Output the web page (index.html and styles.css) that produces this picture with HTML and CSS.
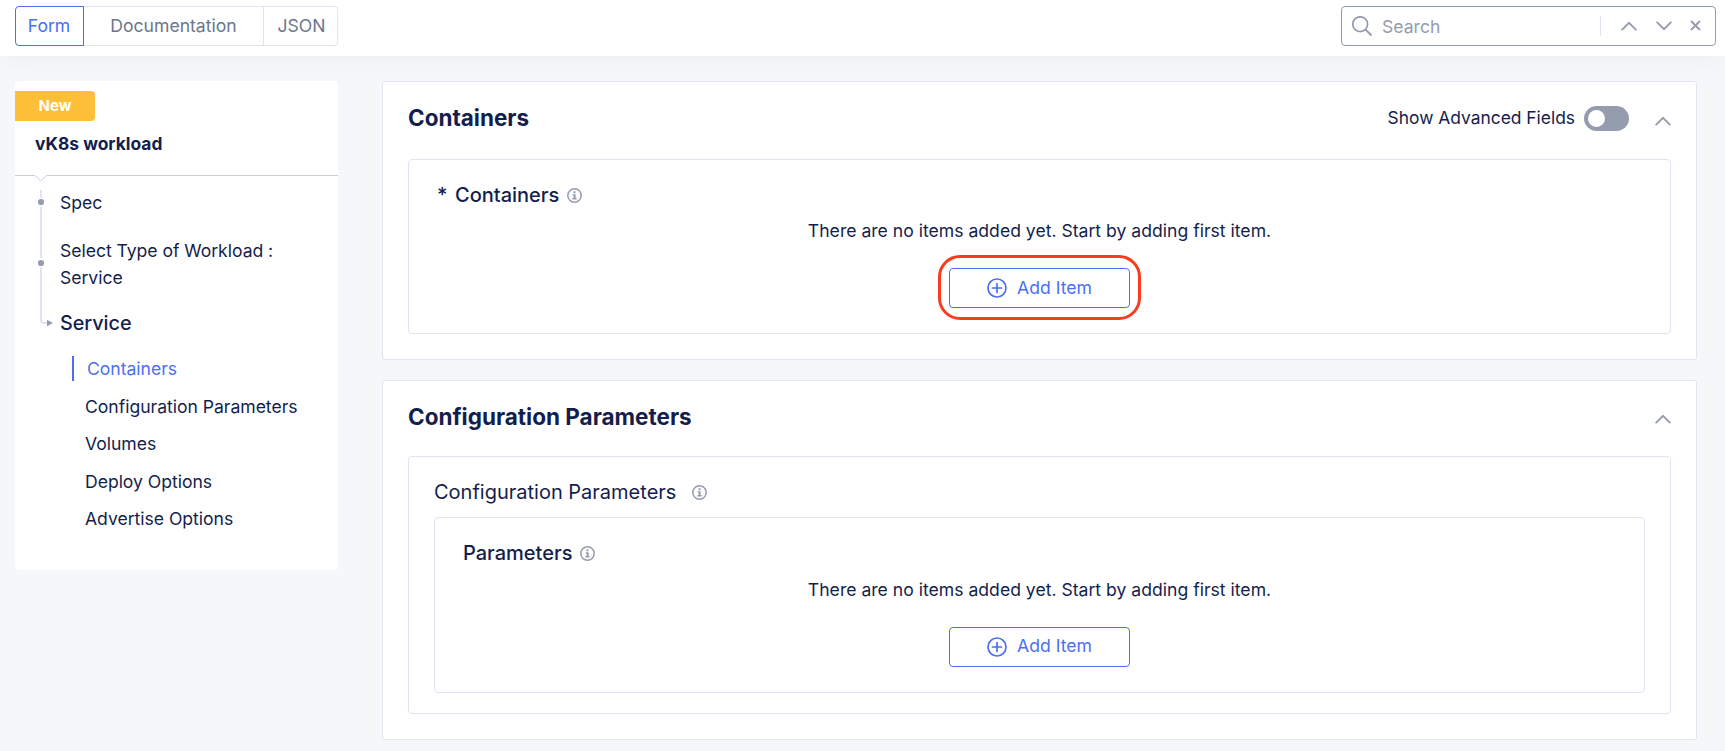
FILE: index.html
```html
<!DOCTYPE html>
<html lang="en">
<head>
<meta charset="utf-8">
<title>vK8s workload</title>
<link rel="stylesheet" href="styles.css">
</head>
<body>
<svg class="defs" width="0" height="0" aria-hidden="true">
  <symbol id="up" viewBox="0 0 16 10"><path d="M1.2 8.6 8 1.8l6.800 6.800" fill="none" stroke="currentColor" stroke-width="1.9" stroke-linecap="round"/></symbol>
  <symbol id="down" viewBox="0 0 16 10"><path d="M1.200 1.400 8 8.200l6.800-6.800" fill="none" stroke="currentColor" stroke-width="1.900" stroke-linecap="round"/></symbol>
  <symbol id="info" viewBox="0 0 15 15">
    <circle cx="7.5" cy="7.500" r="6.700" fill="none" stroke="currentColor" stroke-width="1.500"/>
    <path d="M6.500 3.300h2v1.900h-2zM5.700 6.200h2.900v3.900h1v1.500H5.400v-1.500h1.200V7.600h-.9z" fill="currentColor"/>
  </symbol>
  <symbol id="plus" viewBox="0 0 20 20"><g fill="none" stroke="currentColor" stroke-width="1.700"><circle cx="10" cy="10" r="9"/><path d="M10 5.500v9M5.500 10h9" stroke-linecap="round"/></g></symbol>
</svg>

<header class="topbar">
  <nav class="tabs">
    <a class="tab tab-form active">Form</a>
    <a class="tab tab-docs">Documentation</a>
    <a class="tab tab-json">JSON</a>
  </nav>
  <div class="search">
    <svg class="search-icon" viewBox="0 0 20 20"><g fill="none" stroke="currentColor" stroke-width="1.700"><circle cx="8.200" cy="8.200" r="7.400"/><path d="M13.600 13.600 19.500 19.500" stroke-width="2"/></g></svg>
    <span class="search-text">Search</span>
    <svg class="chevron s-up"><use href="#up"/></svg>
    <svg class="chevron s-down"><use href="#down"/></svg>
    <svg class="close" viewBox="0 0 11 11"><path d="M1 1l9 9M10 1l-9 9" stroke="currentColor" stroke-width="1.900"/></svg>
  </div>
</header>

<main class="page">
  <aside class="sidebar">
    <span class="badge">New</span>
    <h1 class="title">vK8s workload</h1>
    <svg class="divider" viewBox="0 0 323 8"><path d="M0 .5h20l5.700 5.700L31.400.5H323" fill="none" stroke="#c8cde0"/></svg>
    <div class="tree">
      <svg class="rail" viewBox="0 0 45 148">
        <path d="M26 7v8M26 24v51M26 84v53q0 3 3 3h4" fill="none" stroke="#e1e3f1" stroke-width="2"/>
        <g fill="#949cae"><circle cx="26" cy="19" r="3.100"/><circle cx="26" cy="80" r="3.100"/><path d="M32 136.800v6.400l6-3.200z"/></g>
      </svg>
      <div class="steps">
        <a class="step">Spec</a>
        <a class="step step-type">Select Type of Workload :<br>Service</a>
        <a class="step step-current">Service</a>
        <ul class="sub">
          <li class="sub-item current">Containers</li>
          <li class="sub-item">Configuration Parameters</li>
          <li class="sub-item">Volumes</li>
          <li class="sub-item">Deploy Options</li>
          <li class="sub-item">Advertise Options</li>
        </ul>
      </div>
    </div>
  </aside>

  <div class="content">
    <section class="card">
      <header class="card-head">
        <h2 class="heading">Containers</h2>
        <span class="adv">Show Advanced Fields</span>
        <span class="toggle"><span class="knob"></span></span>
        <svg class="chevron fold"><use href="#up"/></svg>
      </header>
      <div class="box box-main">
        <div class="label label-strong"><span class="star">*</span>Containers<svg class="info"><use href="#info"/></svg></div>
        <p class="empty">There are no items added yet. Start by adding first item.</p>
        <button class="add marked"><svg class="plus"><use href="#plus"/></svg><span>Add Item</span></button>
      </div>
    </section>

    <section class="card card-config">
      <header class="card-head">
        <h2 class="heading">Configuration Parameters</h2>
        <svg class="chevron fold"><use href="#up"/></svg>
      </header>
      <div class="box box-outer">
        <div class="label label-outer">Configuration Parameters<svg class="info"><use href="#info"/></svg></div>
        <div class="box box-inner">
          <div class="label label-strong">Parameters<svg class="info"><use href="#info"/></svg></div>
          <p class="empty">There are no items added yet. Start by adding first item.</p>
          <button class="add"><svg class="plus"><use href="#plus"/></svg><span class="raised">Add Item</span></button>
        </div>
      </div>
    </section>
  </div>
</main>
</body>
</html>
```
FILE: styles.css
```css
* { box-sizing: border-box; margin: 0; padding: 0; }
body {
  height: 751px;
  overflow: hidden;
  background: #f5f7f9;
  color: #141e4d;
  font: 400 17.6px/24px Inter, "Liberation Sans", sans-serif;
}
svg { display: block; flex: none; }
.defs { position: absolute; }

.topbar {
  position: relative;
  display: flex;
  justify-content: space-between;
  height: 56px;
  padding: 6px 9px 0 15px;
  background: #fff;
  box-shadow: 0 4px 28px rgba(0, 0, 0, .04);
}
.tabs { display: flex; height: 40px; color: #6c768b; }
.tab {
  display: flex;
  align-items: center;
  justify-content: center;
  border: 1px solid #e1e3f0;
  border-left: 0;
}
.tab-form { width: 69px; padding-right: 1px; border-left: 1px solid; border-radius: 4px 0 0 4px; }
.tab-docs { width: 180px; }
.tab-json { width: 74px; padding-left: 2px; border-radius: 0 4px 4px 0; }
.tab.active { color: #4a6ff3; border-color: #4a6ff3; }

.search {
  display: flex;
  align-items: center;
  width: 375px;
  height: 40px;
  padding: 0 14px 0 10px;
  border: 1px solid #949cb0;
  border-radius: 4px;
  background: #fff;
  color: #949cae;
}
.search-icon { width: 20px; height: 20px; }
.search-text {
  flex: 1;
  height: 20px;
  margin-left: 10px;
  padding-top: 1px;
  line-height: 20px;
  border-right: 1px solid #e1e3f0;
}
.chevron { width: 16px; height: 10px; color: #949cae; }
.s-up { margin-left: 20px; }
.s-down { margin: 0 18px 0 19px; }
.close { width: 11px; height: 11px; margin-top: -1px; }

.page { display: flex; align-items: flex-start; gap: 44px; padding: 25px 28px 0 15px; }

.sidebar {
  flex: none;
  width: 323px;
  height: 489px;
  padding-top: 10px;
  border-radius: 4px;
  background: #fff;
}
.badge {
  display: block;
  width: 80px;
  height: 30px;
  border-radius: 0 4px 4px 0;
  background: #fdbf38;
  color: #fff;
  font-size: 15px;
  font-weight: 700;
  line-height: 30px;
  text-align: center;
}
.title { margin: 11px 0 19px 20px; font-size: 17.4px; font-weight: 700; line-height: 24px; }
.divider { width: 323px; height: 8px; }
.tree { display: flex; }
.rail { width: 45px; height: 148px; }
.steps { display: flex; flex-direction: column; padding-top: 6px; }
.step { line-height: 27px; letter-spacing: -.04px; }
.step-type { margin-top: 21px; }
.step-current { margin-top: 19px; font-size: 19.8px; font-weight: 500; }
.sub { margin: 19px 0 0 11px; list-style: none; }
.sub-item { padding-left: 14px; margin-bottom: 12.500px; line-height: 25px; letter-spacing: -.03px; }
.sub-item.current { margin-left: 1px; border-left: 2px solid #4a6ff3; padding-left: 13px; color: #4a6ff3; }

.content { flex: 1; }
.card { padding: 0 25px 25px; border: 1px solid #e1e5ef; border-radius: 3px; background: #fff; }
.card-config { margin-top: 20px; }
.card-head { display: flex; align-items: center; height: 72px; margin-bottom: 5px; }
.card-config .card-head { margin-bottom: 3px; }
.heading { flex: 1; font-size: 22.500px; font-weight: 700; line-height: 30px; }
.adv { font-size: 17.400px; }
.toggle { width: 45px; height: 25px; margin-left: 9px; padding: 4px; border-radius: 13px; background: #949cae; }
.knob { display: block; width: 17px; height: 17px; border-radius: 50%; background: #fff; }
.fold { margin: 6px 0 0 26px; }
.card-config .fold { margin-top: 3px; }

.box { border: 1px solid #e1e3f0; border-radius: 4px; }
.box-main { padding: 23px 28px 25px; }
.box-outer { padding: 23px 25px 20px; }
.box-inner { margin-top: 13px; padding: 23px 28px 25px; }
.label { display: flex; align-items: center; font-size: 20px; line-height: 24px; }
.label-strong { font-weight: 500; }
.star { width: 18px; }
.info { width: 15px; height: 15px; margin-left: 8px; color: #949cae; }
.label-outer .info { margin: 1px 0 0 16px; }
.empty { margin-top: 12px; text-align: center; }
.box-inner .empty { margin-top: 13px; }
.add {
  position: relative;
  display: flex;
  align-items: center;
  justify-content: center;
  gap: 10px;
  width: 181px;
  height: 40px;
  margin: 25px auto 0;
  border: 1px solid #4a6ff3;
  border-radius: 4px;
  background: #fff;
  color: #4a6ff3;
  font: inherit;
}
.plus { width: 20px; height: 20px; }
.raised { margin-top: -2px; }
/* highlight ring drawn over the button */
.marked::after {
  content: "";
  position: absolute;
  inset: -14px -12px -13px;
  border: 3px solid #fb3b1e;
  border-radius: 22px;
}
```
